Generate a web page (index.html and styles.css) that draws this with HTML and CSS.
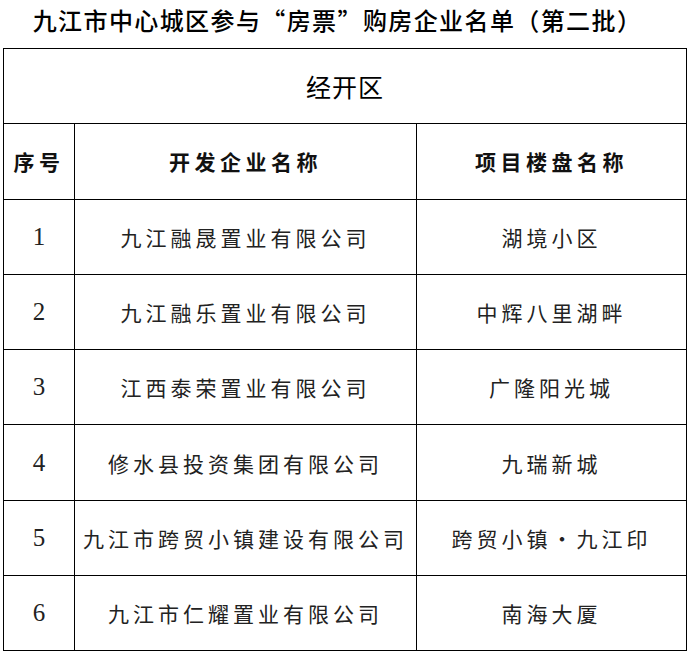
FILE: index.html
```html
<!DOCTYPE html>
<html lang="zh-CN">
<head>
<meta charset="utf-8">
<title>九江市中心城区参与“房票”购房企业名单（第二批）</title>
<link rel="stylesheet" href="styles.css">
</head>
<body>
<h1 class="title">九江市中心城区参与“房票”购房企业名单（第二批）</h1>
<table class="list">
  <colgroup>
    <col class="c-no">
    <col class="c-dev">
    <col class="c-proj">
  </colgroup>
  <tr class="zone-row"><td colspan="3" class="zone">经开区</td></tr>
  <tr class="head-row">
    <th>序号</th>
    <th>开发企业名称</th>
    <th>项目楼盘名称</th>
  </tr>
  <tr><td class="num">1</td><td>九江融晟置业有限公司</td><td>湖境小区</td></tr>
  <tr><td class="num">2</td><td>九江融乐置业有限公司</td><td>中辉八里湖畔</td></tr>
  <tr><td class="num">3</td><td>江西泰荣置业有限公司</td><td>广隆阳光城</td></tr>
  <tr><td class="num">4</td><td>修水县投资集团有限公司</td><td>九瑞新城</td></tr>
  <tr><td class="num">5</td><td>九江市跨贸小镇建设有限公司</td><td>跨贸小镇·九江印</td></tr>
  <tr><td class="num">6</td><td>九江市仁耀置业有限公司</td><td>南海大厦</td></tr>
</table>
</body>
</html>
```

FILE: styles.css
```css
html, body {
  margin: 0;
  padding: 0;
  background: #ffffff;
}
body {
  font-family: "Noto Sans CJK SC", "Noto Sans", sans-serif;
  color: #111;
}
.title {
  margin: 0;
  height: 48px;
  line-height: 40px;
  text-align: center;
  font-size: 24px;
  font-weight: 500;
  letter-spacing: 1.4px;
  color: #000;
  padding-right: 14px;
  box-sizing: border-box;
}
.list {
  margin-left: 3px;
  width: 683px;
  border-collapse: collapse;
  table-layout: fixed;
}
.c-no { width: 71px; }
.c-dev { width: 342px; }
.c-proj { width: 270px; }
.list td, .list th {
  border: 1.5px solid #000;
  height: 74.3px;
  padding: 0;
  text-align: center;
  vertical-align: middle;
  font-size: 21px;
  font-weight: 400;
  letter-spacing: 4px;
  color: #222;
}
.list td.zone {
  font-size: 25px;
  letter-spacing: 1px;
  color: #000;
}
.list th {
  font-size: 21px;
  font-weight: 700;
  letter-spacing: 4.5px;
  color: #111;
}
.list td.num {
  font-family: "Liberation Serif", serif;
  font-size: 25px;
  letter-spacing: 0;
}
```
